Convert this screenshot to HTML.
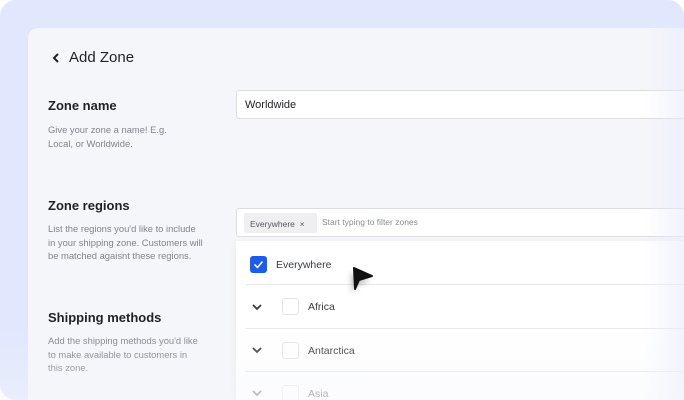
<!DOCTYPE html>
<html><head><style>
*{margin:0;padding:0;box-sizing:border-box}
html,body{width:684px;height:400px;overflow:hidden;background:#fff}
body{font-family:"Liberation Sans",sans-serif;position:relative}
.outer{position:absolute;left:0;top:0;width:684px;height:400px;background:#e1e7fd;border-radius:16px}
.card{position:absolute;left:28px;top:28px;width:656px;height:372px;background:#f5f6fa;border-top-left-radius:10px}
.t{position:absolute;color:#1f2126}
.h{font-size:13px;font-weight:bold}
.d{font-size:9.4px;color:#80848d;line-height:13.5px}
.input{position:absolute;left:236px;background:#fff;border:1px solid #dcdde2;border-right:none;border-radius:3px 0 0 3px}
.panel{position:absolute;left:236px;top:241px;width:448px;height:159px;background:#fff;box-shadow:0 2px 8px rgba(0,0,0,.06)}
.row{position:absolute;left:10px;right:0;border-top:1px solid #e8e9ed}
.cb{position:absolute;width:17px;height:17px;border:1px solid #e2e3e7;border-radius:3px;background:#fff}
.chev{position:absolute;left:16px;width:10px;height:8px}
.fade{position:absolute;left:0;top:0;width:684px;height:400px;background:linear-gradient(to bottom,rgba(245,246,250,0) 82%,rgba(245,246,250,.4) 100%);pointer-events:none}
.rf{position:absolute;right:0;top:28px;width:40px;height:372px;background:linear-gradient(to right,rgba(232,236,252,0),rgba(232,236,252,.6))}
</style></head><body>
<div class="outer"></div>
<div class="card"></div>
<svg style="position:absolute;left:52px;top:53px" width="8" height="10" viewBox="0 0 8 10"><path d="M6 1L2 5L6 9" stroke="#1f2126" stroke-width="2" fill="none"/></svg>
<div class="t" style="left:69px;top:49px;font-size:15px">Add Zone</div>
<div class="t h" style="left:48px;top:98px">Zone name</div>
<div class="t d" style="left:48px;top:123px">Give your zone a name! E.g.<br>Local, or Worldwide.</div>
<div class="input" style="top:90px;width:448px;height:29px"><span style="position:absolute;left:8px;top:8px;font-size:11px;color:#1f2126">Worldwide</span></div>
<div class="t h" style="left:48px;top:198px">Zone regions</div>
<div class="t d" style="left:48px;top:222px">List the regions you'd like to include<br>in your shipping zone. Customers will<br>be matched agaisnt these regions.</div>
<div class="input" style="top:208px;width:448px;height:29px">
<span style="position:absolute;left:7px;top:4px;width:73px;height:20px;background:#efeff1;border-radius:2px;font-size:8.5px;color:#55585f;padding:6px 0 0 6px">Everywhere&nbsp;&nbsp;×</span>
<span style="position:absolute;left:85px;top:8px;font-size:8.5px;color:#8a8d94">Start typing to filter zones</span></div>
<div class="t h" style="left:48px;top:310px">Shipping methods</div>
<div class="t d" style="left:48px;top:334px">Add the shipping methods you'd like<br>to make available to customers in<br>this zone.</div>
<div class="panel">
<div style="position:absolute;left:14px;top:15px;width:17px;height:17px;background:#1a5cf0;border-radius:3px"><svg width="17" height="17"><path d="M4.5 8.5L7.5 11.5L12.5 5.5" stroke="#fff" stroke-width="1.6" fill="none"/></svg></div>
<div style="position:absolute;left:40px;top:18px;font-size:10.5px;color:#3a3c42">Everywhere</div>
<div class="row" style="top:43px"></div>
<svg class="chev" style="top:62px" viewBox="0 0 10 8"><path d="M1 2L5 6L9 2" stroke="#3a3c42" stroke-width="1.8" fill="none"/></svg>
<div class="cb" style="left:46px;top:57px"></div>
<div style="position:absolute;left:72px;top:60px;font-size:10.5px;color:#3a3c42">Africa</div>
<div class="row" style="top:87px"></div>
<svg class="chev" style="top:105px" viewBox="0 0 10 8"><path d="M1 2L5 6L9 2" stroke="#3a3c42" stroke-width="1.8" fill="none"/></svg>
<div class="cb" style="left:46px;top:101px"></div>
<div style="position:absolute;left:72px;top:104px;font-size:10.5px;color:#3a3c42">Antarctica</div>
<div class="row" style="top:130px"></div>
<svg class="chev" style="top:148px;opacity:.5" viewBox="0 0 10 8"><path d="M1 2L5 6L9 2" stroke="#3a3c42" stroke-width="1.8" fill="none"/></svg>
<div class="cb" style="left:46px;top:144px;opacity:.6"></div>
<div style="position:absolute;left:72px;top:147px;font-size:10.5px;color:#8a8d94">Asia</div>
</div>
<svg style="position:absolute;left:340px;top:260px;overflow:visible" width="40" height="40" viewBox="0 0 40 40"><defs><filter id="s" x="-50%" y="-50%" width="200%" height="200%"><feGaussianBlur stdDeviation="3"/></filter></defs><path d="M14 9L33 17L19 22L15 30Z" fill="#000" opacity=".25" filter="url(#s)" transform="translate(-3,4)"/><path d="M14 8L32 16L19 20L15 29Z" fill="#111" stroke="#111" stroke-width="2" stroke-linejoin="round"/></svg>
<div class="rf"></div>
<div class="fade"></div>
</body></html>
